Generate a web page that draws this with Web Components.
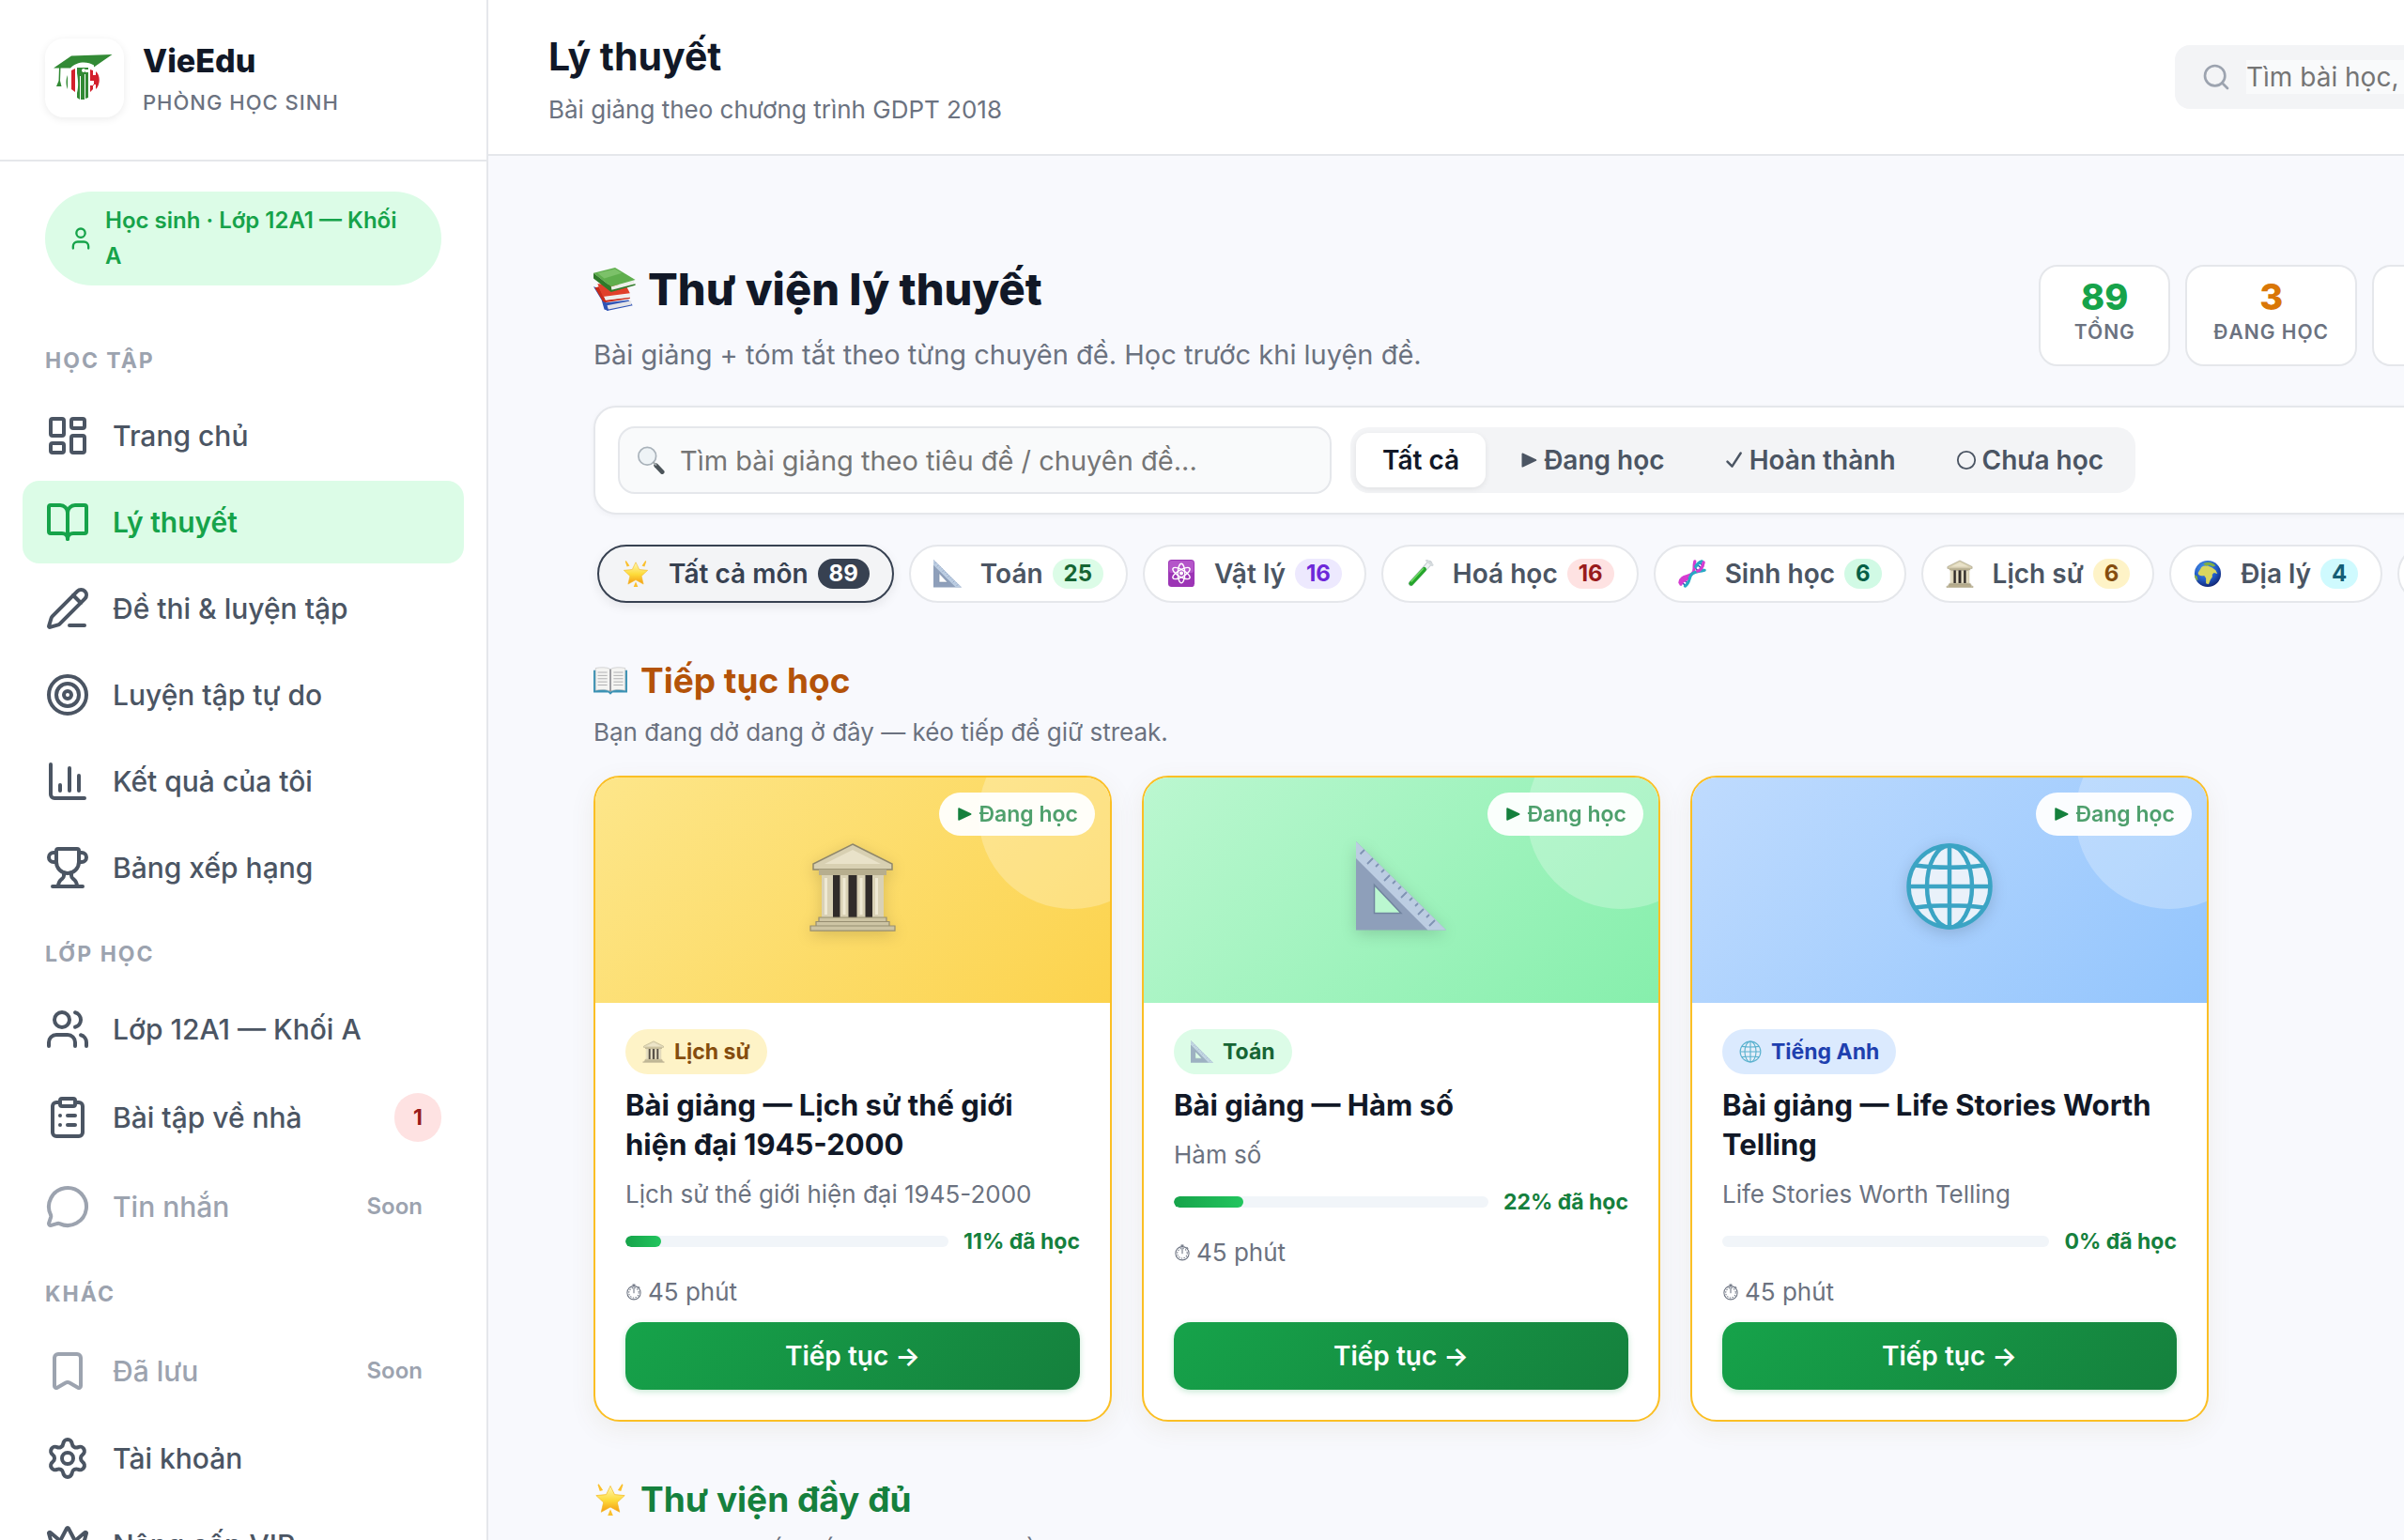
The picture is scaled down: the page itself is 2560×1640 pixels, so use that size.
<!DOCTYPE html>
<html lang="vi">
<head>
<meta charset="utf-8">
<title>VieEdu - Lý thuyết</title>
<style>
    html, body { margin: 0; height: 100%; }
    body {
        font-family: Inter, "Open Sans", sans-serif;
        font-size: 28px;
        color: #111827;
        background: #f8f9fd;
        overflow: hidden;
    }
    vie-app { height: 100%; }
</style>
</head>
<body>
<vie-app>
    <vie-sidebar slot="sidebar">
        <vie-nav-group label="Học tập">
            <vie-nav-item icon="dashboard">Trang chủ</vie-nav-item>
            <vie-nav-item icon="book" active>Lý thuyết</vie-nav-item>
            <vie-nav-item icon="pen">Đề thi &amp; luyện tập</vie-nav-item>
            <vie-nav-item icon="target">Luyện tập tự do</vie-nav-item>
            <vie-nav-item icon="chart">Kết quả của tôi</vie-nav-item>
            <vie-nav-item icon="trophy">Bảng xếp hạng</vie-nav-item>
        </vie-nav-group>
        <vie-nav-group label="Lớp học">
            <vie-nav-item icon="users">Lớp 12A1 — Khối A</vie-nav-item>
            <vie-nav-item icon="clipboard" badge="1">Bài tập về nhà</vie-nav-item>
            <vie-nav-item icon="message" soon>Tin nhắn</vie-nav-item>
        </vie-nav-group>
        <vie-nav-group label="Khác">
            <vie-nav-item icon="bookmark" soon>Đã lưu</vie-nav-item>
            <vie-nav-item icon="settings">Tài khoản</vie-nav-item>
            <vie-nav-item icon="crown">Nâng cấp VIP</vie-nav-item>
        </vie-nav-group>
    </vie-sidebar>

    <vie-topbar slot="topbar" heading="Lý thuyết" sub="Bài giảng theo chương trình GDPT 2018"></vie-topbar>

    <vie-page-head heading="Thư viện lý thuyết" sub="Bài giảng + tóm tắt theo từng chuyên đề. Học trước khi luyện đề.">
        <vie-stat value="89" label="Tổng" style="--tone:#16a34a"></vie-stat>
        <vie-stat value="3" label="Đang học" style="--tone:#d97706"></vie-stat>
        <vie-stat value="0" label="Hoàn thành" style="--tone:#2563eb"></vie-stat>
    </vie-page-head>

    <vie-toolbar></vie-toolbar>

    <vie-chips>
        <vie-chip icon="star" count="89" active style="--badge:#374151;--ink:#fff">Tất cả môn</vie-chip>
        <vie-chip icon="ruler" count="25" style="--badge:#dcfce7;--ink:#166534">Toán</vie-chip>
        <vie-chip icon="atom" count="16" style="--badge:#ede9fe;--ink:#6d28d9">Vật lý</vie-chip>
        <vie-chip icon="tube" count="16" style="--badge:#fee2e2;--ink:#991b1b">Hoá học</vie-chip>
        <vie-chip icon="dna" count="6" style="--badge:#d1fae5;--ink:#065f46">Sinh học</vie-chip>
        <vie-chip icon="temple" count="6" style="--badge:#fef3c7;--ink:#854d0e">Lịch sử</vie-chip>
        <vie-chip icon="earth" count="4" style="--badge:#cffafe;--ink:#155e75">Địa lý</vie-chip>
        <vie-chip icon="globe" count="12" style="--badge:#dbeafe;--ink:#1e40af">Tiếng Anh</vie-chip>
    </vie-chips>

    <vie-section icon="openbook" heading="Tiếp tục học" sub="Bạn đang dở dang ở đây — kéo tiếp để giữ streak." style="--tone:#b45309">
        <vie-lesson icon="temple" subject="Lịch sử" heading="Bài giảng — Lịch sử thế giới hiện đại 1945-2000" topic="Lịch sử thế giới hiện đại 1945-2000" done="11"
            style="--from:#fde68a;--to:#fcd34d;--tag:#fef3c7;--ink:#854d0e"></vie-lesson>
        <vie-lesson icon="ruler" subject="Toán" heading="Bài giảng — Hàm số" topic="Hàm số" done="22"
            style="--from:#bbf7d0;--to:#86efac;--tag:#dcfce7;--ink:#166534"></vie-lesson>
        <vie-lesson icon="globe" subject="Tiếng Anh" heading="Bài giảng — Life Stories Worth Telling" topic="Life Stories Worth Telling" done="0"
            style="--from:#bfdbfe;--to:#93c5fd;--tag:#dbeafe;--ink:#1e40af"></vie-lesson>
    </vie-section>

    <vie-section icon="star" heading="Thư viện đầy đủ" sub="Các bài giảng sắp xếp theo chuyên đề." style="--tone:#15803d"></vie-section>
</vie-app>

<script>
// line icons, 24x24 grid
const LINE = {
    dashboard: '<rect width="7" height="9" x="3" y="3" rx="1"/><rect width="7" height="5" x="14" y="3" rx="1"/><rect width="7" height="9" x="14" y="12" rx="1"/><rect width="7" height="5" x="3" y="16" rx="1"/>',
    book: '<path d="M12 7v14"/><path d="M3 18a1 1 0 0 1-1-1V4a1 1 0 0 1 1-1h5a4 4 0 0 1 4 4 4 4 0 0 1 4-4h5a1 1 0 0 1 1 1v13a1 1 0 0 1-1 1h-6a3 3 0 0 0-3 3 3 3 0 0 0-3-3z"/>',
    pen: '<path d="M13 21h8"/><path d="m15 5 4 4"/><path d="M21.174 6.812a1 1 0 0 0-3.986-3.987L3.842 16.174a2 2 0 0 0-.5.83l-1.321 4.352a.5.5 0 0 0 .623.622l4.353-1.32a2 2 0 0 0 .83-.497z"/>',
    target: '<circle cx="12" cy="12" r="10"/><circle cx="12" cy="12" r="6"/><circle cx="12" cy="12" r="2"/>',
    chart: '<path d="M3 3v16a2 2 0 0 0 2 2h16"/><path d="M18 17V9"/><path d="M13 17V5"/><path d="M8 17v-3"/>',
    trophy: '<path d="M10 14.66v1.626a2 2 0 0 1-.976 1.696A5 5 0 0 0 7 21.978"/><path d="M14 14.66v1.626a2 2 0 0 0 .976 1.696A5 5 0 0 1 17 21.978"/><path d="M18 9h1.5a1 1 0 0 0 0-5H18"/><path d="M4 22h16"/><path d="M6 9a6 6 0 0 0 12 0V3a1 1 0 0 0-1-1H7a1 1 0 0 0-1 1z"/><path d="M6 9H4.5a1 1 0 0 1 0-5H6"/>',
    users: '<path d="M16 21v-2a4 4 0 0 0-4-4H6a4 4 0 0 0-4 4v2"/><circle cx="9" cy="7" r="4"/><path d="M22 21v-2a4 4 0 0 0-3-3.87"/><path d="M16 3.13a4 4 0 0 1 0 7.75"/>',
    clipboard: '<rect width="8" height="4" x="8" y="2" rx="1"/><path d="M16 4h2a2 2 0 0 1 2 2v14a2 2 0 0 1-2 2H6a2 2 0 0 1-2-2V6a2 2 0 0 1 2-2h2"/><path d="M12 11h4"/><path d="M12 16h4"/><path d="M8 11h.01"/><path d="M8 16h.01"/>',
    message: '<path d="M2.992 16.342a2 2 0 0 1 .094 1.167l-1.065 3.29a1 1 0 0 0 1.236 1.168l3.413-.998a2 2 0 0 1 1.099.092 10 10 0 1 0-4.777-4.719"/>',
    bookmark: '<path d="M17 3a2 2 0 0 1 2 2v15a1 1 0 0 1-1.496.868l-4.512-2.578a2 2 0 0 0-1.984 0l-4.512 2.578A1 1 0 0 1 5 20V5a2 2 0 0 1 2-2z"/>',
    settings: '<path d="M9.671 4.136a2.34 2.34 0 0 1 4.659 0 2.34 2.34 0 0 0 3.319 1.915 2.34 2.34 0 0 1 2.33 4.033 2.34 2.34 0 0 0 0 3.831 2.34 2.34 0 0 1-2.33 4.033 2.34 2.34 0 0 0-3.319 1.915 2.34 2.34 0 0 1-4.659 0 2.34 2.34 0 0 0-3.32-1.915 2.34 2.34 0 0 1-2.33-4.033 2.34 2.34 0 0 0 0-3.831A2.34 2.34 0 0 1 6.35 6.051a2.34 2.34 0 0 0 3.319-1.915"/><circle cx="12" cy="12" r="3"/>',
    crown: '<path d="M11.562 3.266a.5.5 0 0 1 .876 0L15.39 8.87a1 1 0 0 0 1.516.294L21.183 5.5a.5.5 0 0 1 .798.519l-2.834 10.246a1 1 0 0 1-.956.734H5.81a1 1 0 0 1-.957-.734L2.02 6.02a.5.5 0 0 1 .798-.519l4.276 3.664a1 1 0 0 0 1.516-.294z"/><path d="M5 21h14"/>',
    user: '<path d="M19 21v-2a4 4 0 0 0-4-4H9a4 4 0 0 0-4 4v2"/><circle cx="12" cy="7" r="4"/>',
    search: '<circle cx="11" cy="11" r="8"/><path d="m21 21-4.3-4.3"/>',
    play: '<path d="M4 4v16l17-8z" fill="currentColor"/>',
    check: '<path stroke-width="3" d="m3 14 6 6L20 3"/>',
    ring: '<circle cx="12" cy="12" r="10"/>',
    timer: '<g stroke-width="1.4"><circle cx="12" cy="13" r="9.5"/><path d="M12 13V6.500M10.500 1.500h3M12 1.500v2M18.500 4.500l1.500 1.500"/><circle cx="12" cy="13" r="7" stroke-dasharray=".8 2.900"/></g>'
};

// coloured pictures, 32x32 grid
const ART = {
    star: '<defs><linearGradient id="s" x2="0" y2="1"><stop offset=".1" stop-color="#fff3a0"/><stop offset=".55" stop-color="#fddb3a"/><stop offset="1" stop-color="#f59a12"/></linearGradient></defs><path fill="url(#s)" stroke="#f3b61f" stroke-width=".6" stroke-linejoin="round" d="m16 3 4 8.200 9.500.9-7 6.500 2.200 9.200L16 23l-8.700 4.800 2.200-9.200-7-6.500 9.500-.9z"/><path fill="#fbc02d" d="M5 1l4 6-3 1-2-6zM27 1l-4 6 3 1 2-6zM16 25l-2.500 6h5z"/>',
    ruler: '<path fill="#8e9fba" d="M0 0v31.500h32z"/><path fill="#bccde2" d="M0 0v6l25.500 25.500H32z"/><path stroke="#7f93b3" stroke-width=".6" d="m3 3-1.500 1.500M6 6 4 8M8 8l-1 1M10 10l-1 1M12 12l-2 2M14 14l-1 1M16 16l-1 1M18 18l-2 2M20 20l-1 1M22 22l-1 1M24 24l-2 2M26 26l-1 1M28 28l-2 2"/><path fill="var(--hole,#fff)" stroke="#71849f" stroke-width=".5" d="M6.500 15.500V25.500h9.500z"/>',
    atom: '<rect width="30" height="31" x="1" rx="4" fill="#9c35b5"/><rect width="28" height="14" x="2" y="1" rx="3" fill="#b455c9"/><g fill="none" stroke="#fff" stroke-width="1.500"><ellipse cx="16" cy="15.500" rx="4" ry="11"/><ellipse cx="16" cy="15.500" rx="4" ry="11" transform="rotate(60 16 15.500)"/><ellipse cx="16" cy="15.500" rx="4" ry="11" transform="rotate(120 16 15.500)"/></g><circle cx="16" cy="15.500" r="2.200" fill="#fff"/>',
    tube: '<path fill="none" stroke="#c4cbd0" stroke-width="6" stroke-linecap="round" d="M27 4 6 27"/><path fill="none" stroke="#eef2f3" stroke-width="4" d="M27 4 21 11"/><path fill="none" stroke="#25a52b" stroke-width="5" stroke-linecap="round" d="M21 11 6 27"/><path stroke="#72df65" stroke-width="1.500" d="M20 10 6 25"/><path stroke="#d5dadd" stroke-width="3" stroke-linecap="round" d="m24 1 6 5"/>',
    dna: '<path stroke="#3757b9" stroke-width="1.600" d="m21 5 7 6M5 21l6 6M19 9l4 4M9 19l4 4M24 3l5 5M3 25l5 4"/><g fill="none" stroke-width="3.400" stroke-linecap="round"><path stroke="#d63bd0" d="M19 2c-2 8 1 10 -3 14S3 18 2 26"/><path stroke="#28a9c4" d="M30 12c-8 2-10 1-14 4S14 26 8 30"/><path stroke="#28a9c4" d="M20 8c2-4 4-5 7-6"/><path stroke="#d63bd0" d="M22 13c4-1 6-5 7-10M3 28c1-4 4-5 7-6"/></g>',
    temple: '<path fill="#d8d0b2" stroke="#8f876b" stroke-width=".5" d="M16 1 30 8v2H2V8z"/><path fill="#e9e2c9" d="M16 3 26 8H6z"/><path fill="#b7ae8e" d="M4 10h24v2H4z"/><path fill="#302b29" d="M6 12h20v15H6z"/><g fill="#d9d1b5"><path d="M5 12h4v15H5zM11.500 12h3v15h-3zM17.500 12h3v15h-3zM23 12h4v15h-4z"/></g><path fill="#efe9d4" d="M6 13h1v13H6zM12.500 13h1v13h-1zM18.500 13h1v13h-1zM24 13h1v13h-1z"/><path fill="#cdc4a4" stroke="#968d70" stroke-width=".4" d="M4 27h24v1.500H4zM3 28.500h26V30H3zM1 30h30v1.700H1z"/>',
    earth: '<defs><radialGradient id="e" cx=".4" cy=".3" r=".75"><stop stop-color="#4f9df0"/><stop offset=".6" stop-color="#2058c4"/><stop offset="1" stop-color="#10206a"/></radialGradient></defs><circle cx="16" cy="16" r="15" fill="url(#e)"/><path fill="#d9d65e" d="M8 10c1-3 5-3 8-3l5 2 4 3 2 4-4-1-2 2c1 3-1 4-2 6l-2 5-3-1v-6l-2-3c-4 1-7 0-7-3z"/><path fill="#7fae45" d="M11 5c3-3 10-3 14 2l-3 1-4-2-4 1zM1 17l3 2 1 5c-3-2-4-4-4-7z"/>',
    globe: '<circle cx="16" cy="16" r="15" fill="#e9f1fa"/><g fill="none" stroke="#3ba4c4" stroke-width="1.500"><circle cx="16" cy="16" r="14.500"/><ellipse cx="16" cy="16" rx="8" ry="14.500"/><path d="M16 1.500v29M1.500 16h29M4 8.500c7 1 17 1 24 0M4 23.500c7-1 17-1 24 0"/></g>',
    openbook: '<path fill="#3c93b5" d="M0 6h32v21H18l-2 2-2-2H0z"/><path fill="#f4f4f2" stroke="#b9b9b9" stroke-width=".5" d="M2 4c5-1 11-1 14 1 3-2 9-2 14-1v21c-5-1-11-1-14 1-3-2-9-2-14-1z"/><path stroke="#a9a9ac" stroke-width=".8" d="M4 8h9M4 11h9M4 14h9M4 17h9M4 20h9M19 8h9M19 11h9M19 14h9M19 17h9M19 20h9"/><path stroke="#8d8d92" stroke-width="1.500" d="M16 5v21"/>',
    books: '<path fill="#2f54b5" d="m8 26 18-2 3 4-19 4z"/><path fill="#e4e4e8" d="m10 28 18-3.500v3L11 31z"/><path fill="#2f54b5" d="M0 14l6 10 2 7 3 1-2-7-6-10z"/><path fill="#c92a18" d="m1 15 6 10 2 .8L27 23v-1.200L9 24 4 14z"/><path fill="#eeeeec" d="m8 21.500 19-2v2.600l-18 2z"/><path fill="#e0402a" d="m3 12 21 1 3 6-20 2.500z"/><path fill="#ecefe9" d="m13 14 17-4.500v3.500l-16.500 4.500z"/><path fill="#5fae4d" d="M0 4 16 0l15 9-18 5z"/><path fill="#7cc169" d="m3 4 13-3 5 3-13 4z"/><path fill="#2f7a29" d="M0 4v4l13 10 18-5v-1l-17.500 4.500L13 14z"/>',
    lens: '<circle cx="12" cy="11.500" r="10" fill="#eef3f6" stroke="#a9b2ba" stroke-width="1.800"/><path stroke="#4c5459" stroke-width="5" stroke-linecap="round" d="m22 22 7 7.500"/><path stroke="#a0a7ab" stroke-width="2" d="m18.500 18 4 4"/>'
};

const line = (name, size) => `<svg class="line" width="${size}" height="${size}" viewBox="0 0 24 24" fill="none" stroke="currentColor" stroke-width="2" stroke-linecap="round" stroke-linejoin="round" aria-hidden="true">${LINE[name]}</svg>`;
const art = (name, size) => `<svg class="art" width="${size}" height="${size}" viewBox="0 0 32 32" aria-hidden="true">${ART[name]}</svg>`;

const BASE = `
    *, *::before, *::after { box-sizing: border-box; }
    h1, h2, h3, p { margin: 0; }
    button, input { font: inherit; color: inherit; border: 0; }
    svg { display: block; flex: none; }
`;

class VieElement extends HTMLElement {
    connectedCallback() {
        if (this.shadowRoot) return;
        this.attachShadow({ mode: 'open' });
        this.shadowRoot.innerHTML = `<style>${BASE}${this.css()}</style>${this.html()}`;
    }
    attr(name) {
        return this.getAttribute(name) || '';
    }
}

customElements.define('vie-app', class extends VieElement {
    css() {
        return `
            :host { display: grid; grid-template-columns: 520px minmax(0, 1fr); }
            main { overflow: hidden; }
            /* the study area is wider than the window and is cut at its edge */
            .wide { width: calc(100% + 300px); }
            .content {
                display: flex;
                flex-direction: column;
                padding: 110px 100px 0 112px;
            }
        `;
    }
    html() {
        return `
            <slot name="sidebar"></slot>
            <main>
                <div class="wide">
                    <slot name="topbar"></slot>
                    <div class="content"><slot></slot></div>
                </div>
            </main>
        `;
    }
});

customElements.define('vie-sidebar', class extends VieElement {
    css() {
        return `
            :host {
                display: block;
                background: #fff;
                border-right: 2px solid #e5e7eb;
                overflow: hidden;
            }
            .brand {
                display: flex;
                align-items: center;
                gap: 20px;
                height: 172px;
                padding: 0 48px 4px;
                border-bottom: 2px solid #e5e7eb;
            }
            .logo {
                width: 84px;
                height: 84px;
                border-radius: 20px;
                background: #fff;
                box-shadow: 0 2px 8px rgba(0, 0, 0, 0.08);
            }
            .names { padding-top: 4px; }
            .name { font-size: 34px; line-height: 48px; font-weight: 800; }
            .room {
                font-size: 22px;
                line-height: 40px;
                font-weight: 500;
                letter-spacing: 1px;
                text-transform: uppercase;
                color: #6b7280;
            }
            .pill {
                display: flex;
                align-items: center;
                gap: 12px;
                margin: 32px 48px 36px;
                padding: 12px 40px 12px 24px;
                border-radius: 50px;
                background: #dcfce7;
                color: #16a34a;
                font-size: 24px;
                line-height: 38px;
                font-weight: 600;
            }
            nav { padding: 0 24px; }
        `;
    }
    html() {
        return `
            <div class="brand">
                <div class="logo">
                    <svg width="84" height="84" viewBox="0 0 84 84" role="img" aria-label="VieEdu">
                        <path fill="#328a35" d="M9 31.500 28 18.500 71.500 17 52 30.500v-2C45 24 34 24 27 31.500z"/>
                        <path fill="#328a35" d="M15 31h1.500l-.5 14 1.500 6h-5.500l2.500-6z"/>
                        <path fill="#d3202c" d="M28 34l4-2v25l-4-3zM48 33l3 1v5h3v-4c5 4 5 14 0 19v-5h-3v5l-3 3v-7h4v-5h-4z"/>
                        <path fill="#328a35" d="M24 39v15c-2-4-2-11 0-15zM34 31h12v2h-3v3h3v27l-3 1V38h-1v27h-4V40h-1v25l-3-2V58c2-7 1-15 0-21z"/>
                        <circle cx="41" cy="34" r="2" fill="#fff"/>
                    </svg>
                </div>
                <div class="names">
                    <div class="name">VieEdu</div>
                    <div class="room">Phòng học sinh</div>
                </div>
            </div>
            <div class="pill">${line('user', 28)}<span>Học sinh · Lớp 12A1 — Khối A</span></div>
            <nav><slot></slot></nav>
        `;
    }
});

customElements.define('vie-nav-group', class extends VieElement {
    css() {
        return `
            :host { display: flex; flex-direction: column; gap: 4px; }
            .label {
                padding: 26px 24px 14px;
                font-size: 23px;
                line-height: 36px;
                font-weight: 700;
                letter-spacing: 2px;
                text-transform: uppercase;
                color: #9ca3af;
            }
            :host(:not(:first-child)) { margin-top: 4px; }
        `;
    }
    html() {
        return `<div class="label">${this.attr('label')}</div><slot></slot>`;
    }
});

customElements.define('vie-nav-item', class extends VieElement {
    css() {
        return `
            :host { display: block; }
            a {
                display: flex;
                align-items: center;
                gap: 24px;
                min-height: 88px;
                padding: 0 24px;
                border-radius: 18px;
                color: #4b5563;
                font-weight: 500;
                font-size: 30px;
                line-height: 44px;
                text-decoration: none;
            }
            :host([active]) a { background: #dcfce7; color: #16a34a; font-weight: 600; }
            :host([soon]) a { min-height: 91px; color: #9ca3af; }
            :host([badge]) a { min-height: 91px; }
            .text { flex: 1; }
            .badge {
                width: 50px;
                border-radius: 26px;
                background: #fee2e2;
                color: #991b1b;
                font-size: 23px;
                line-height: 52px;
                font-weight: 700;
                text-align: center;
            }
            .soon { padding-right: 20px; font-size: 24px; font-weight: 600; }
        `;
    }
    html() {
        const badge = this.attr('badge');
        return `
            <a href="#">
                ${line(this.attr('icon'), 48)}
                <span class="text"><slot></slot></span>
                ${badge ? `<span class="badge">${badge}</span>` : ''}
                ${this.hasAttribute('soon') ? '<span class="soon">Soon</span>' : ''}
            </a>
        `;
    }
});

customElements.define('vie-topbar', class extends VieElement {
    css() {
        return `
            :host {
                display: flex;
                align-items: center;
                justify-content: space-between;
                box-sizing: border-box;
                height: 166px;
                padding: 0 64px;
                background: #fff;
                border-bottom: 2px solid #e5e7eb;
            }
            .titles { padding-top: 10px; }
            h1 { font-size: 41px; line-height: 60px; font-weight: 700; }
            p { font-size: 26px; line-height: 54px; color: #6b7280; }
            label {
                display: flex;
                align-items: center;
                gap: 16px;
                width: 480px;
                height: 68px;
                padding: 0 28px;
                border-radius: 16px;
                background: #f3f4f6;
                color: #9ca3af;
            }
            input {
                flex: 1;
                min-width: 0;
                height: 36px;
                padding: 0;
                background: #f9fafb;
                font-size: 28px;
            }
            input::placeholder { color: #757575; }
        `;
    }
    html() {
        return `
            <div class="titles"><h1>${this.attr('heading')}</h1><p>${this.attr('sub')}</p></div>
            <label>${line('search', 32)}<input type="search" placeholder="Tìm bài học, đề thi" aria-label="Tìm kiếm"></label>
        `;
    }
});

customElements.define('vie-page-head', class extends VieElement {
    css() {
        return `
            :host { display: flex; justify-content: space-between; height: 156px; }
            h1 {
                display: flex;
                align-items: center;
                gap: 12px;
                font-size: 47px;
                line-height: 64px;
                font-weight: 800;
            }
            p { margin-top: 16px; font-size: 29px; line-height: 44px; color: #6b7280; }
            .stats { display: flex; align-items: flex-start; gap: 16px; padding-top: 6px; }
        `;
    }
    html() {
        return `
            <div>
                <h1>${art('books', 46)}<span>${this.attr('heading')}</span></h1>
                <p>${this.attr('sub')}</p>
            </div>
            <div class="stats"><slot></slot></div>
        `;
    }
});

customElements.define('vie-stat', class extends VieElement {
    css() {
        return `
            :host {
                display: block;
                box-sizing: border-box;
                min-width: 140px;
                height: 108px;
                padding: 8px 28px;
                border: 2px solid #e5e7eb;
                border-radius: 20px;
                background: #fff;
                text-align: center;
            }
            :host(:last-child) { width: 234px; }
            .value { color: var(--tone); font-size: 38px; line-height: 48px; font-weight: 800; }
            .label {
                font-size: 21px;
                line-height: 28px;
                font-weight: 600;
                letter-spacing: 1px;
                text-transform: uppercase;
                white-space: nowrap;
                color: #6b7280;
            }
        `;
    }
    html() {
        return `<div class="value">${this.attr('value')}</div><div class="label">${this.attr('label')}</div>`;
    }
});

customElements.define('vie-toolbar', class extends VieElement {
    css() {
        return `
            :host {
                display: flex;
                align-items: center;
                gap: 20px;
                box-sizing: border-box;
                height: 116px;
                padding: 0 24px;
                border: 2px solid #e5e7eb;
                border-radius: 24px;
                background: #fff;
                box-shadow: 0 2px 6px rgba(15, 23, 42, 0.04);
            }
            .search {
                display: flex;
                align-items: center;
                gap: 16px;
                width: 760px;
                height: 72px;
                padding: 0 18px;
                border: 2px solid #e5e7eb;
                border-radius: 18px;
                background: #f9fafb;
            }
            input { flex: 1; min-width: 0; padding: 0; background: none; font-size: 29px; }
            input::placeholder { color: #757575; }
            .tabs {
                display: flex;
                gap: 8px;
                padding: 6px;
                border-radius: 20px;
                background: #f3f4f6;
            }
            button {
                display: flex;
                align-items: center;
                gap: 6px;
                height: 58px;
                padding: 0 28px;
                border-radius: 14px;
                background: none;
                color: #4b5563;
                font-size: 28px;
                font-weight: 600;
            }
            button.on { background: #fff; color: #111827; box-shadow: 0 2px 6px rgba(0, 0, 0, 0.08); }
        `;
    }
    html() {
        return `
            <label class="search">${art('lens', 30)}<input type="search" placeholder="Tìm bài giảng theo tiêu đề / chuyên đề..." aria-label="Tìm bài giảng"></label>
            <div class="tabs">
                <button class="on">Tất cả</button>
                <button>${line('play', 20)}Đang học</button>
                <button>${line('check', 20)}Hoàn thành</button>
                <button>${line('ring', 22)}Chưa học</button>
            </div>
        `;
    }
});

customElements.define('vie-chips', class extends VieElement {
    css() {
        return `:host { display: flex; gap: 16px; padding: 32px 4px 0; }`;
    }
    html() {
        return '<slot></slot>';
    }
});

customElements.define('vie-chip', class extends VieElement {
    css() {
        return `
            :host { display: block; flex: none; }
            button {
                display: flex;
                align-items: center;
                height: 62px;
                padding: 0 24px;
                border: 2px solid #e5e7eb;
                border-radius: 31px;
                background: #fff;
                color: #4b5563;
                font-size: 28px;
                font-weight: 600;
            }
            :host([active]) button {
                border-color: #374151;
                background: #f3f4f6;
                color: #374151;
                box-shadow: 0 4px 12px rgba(0, 0, 0, 0.08);
            }
            .text { margin: 0 10px 0 20px; }
            .count {
                padding: 0 12px;
                border-radius: 16px;
                background: var(--badge);
                color: var(--ink);
                font-size: 24px;
                line-height: 32px;
                font-weight: 700;
            }
        `;
    }
    html() {
        return `<button>${art(this.attr('icon'), 30)}<span class="text"><slot></slot></span><span class="count">${this.attr('count')}</span></button>`;
    }
});

customElements.define('vie-section', class extends VieElement {
    css() {
        return `
            :host { display: block; padding-top: 56px; }
            h2 {
                display: flex;
                align-items: center;
                gap: 14px;
                color: var(--tone);
                font-size: 37px;
                line-height: 54px;
                font-weight: 700;
            }
            p { margin-top: 8px; font-size: 26px; line-height: 40px; color: #6b7280; }
            .grid {
                display: grid;
                grid-template-columns: repeat(auto-fill, 552px);
                gap: 32px;
                padding-top: 26px;
            }
        `;
    }
    html() {
        return `
            <h2>${art(this.attr('icon'), 36)}<span>${this.attr('heading')}</span></h2>
            <p>${this.attr('sub')}</p>
            <div class="grid"><slot></slot></div>
        `;
    }
});

customElements.define('vie-lesson', class extends VieElement {
    css() {
        return `
            :host {
                display: flex;
                flex-direction: column;
                overflow: hidden;
                box-sizing: border-box;
                border: 2px solid #fbbf24;
                border-radius: 28px;
                background: #fff;
                box-shadow: 0 8px 28px rgba(120, 90, 10, 0.08);
            }
            .hero {
                position: relative;
                display: grid;
                place-items: center;
                height: 240px;
                padding-bottom: 8px;
                overflow: hidden;
                background: linear-gradient(135deg, var(--from), var(--to));
            }
            .hero::after {
                content: "";
                position: absolute;
                top: -60px;
                right: -60px;
                width: 200px;
                height: 200px;
                border-radius: 50%;
                background: rgba(255, 255, 255, 0.25);
            }
            .hero .art { --hole: var(--from); filter: drop-shadow(0 4px 8px rgba(0, 0, 0, 0.15)); }
            .state {
                position: absolute;
                z-index: 1;
                top: 16px;
                right: 16px;
                display: flex;
                align-items: center;
                gap: 6px;
                height: 46px;
                padding: 0 18px;
                border-radius: 23px;
                background: rgba(255, 255, 255, 0.95);
                color: #15803d;
                font-size: 23px;
                font-weight: 600;
            }
            .state span { opacity: 0.75; }
            .body {
                display: flex;
                flex: 1;
                flex-direction: column;
                align-items: stretch;
                padding: 28px 32px 32px;
            }
            .tag {
                display: flex;
                align-items: center;
                align-self: flex-start;
                gap: 10px;
                height: 48px;
                padding: 0 18px;
                border-radius: 24px;
                background: var(--tag);
                color: var(--ink);
                font-size: 23px;
                line-height: 28px;
                font-weight: 700;
            }
            .tag .art { --hole: var(--tag); opacity: 0.8; }
            h3 { margin: 12px 0; padding-right: 12px; font-size: 31px; line-height: 42px; font-weight: 700; }
            .topic { font-size: 26px; line-height: 40px; color: #6b7280; }
            .progress {
                display: flex;
                align-items: center;
                gap: 16px;
                margin: 12px 0 18px;
                color: #15803d;
                font-size: 23px;
                line-height: 36px;
                font-weight: 700;
            }
            .track { flex: 1; height: 12px; border-radius: 6px; background: #f1f5f9; overflow: hidden; }
            .fill { height: 100%; border-radius: 6px; background: linear-gradient(90deg, #16a34a, #22c55e); }
            .time {
                display: flex;
                align-items: center;
                gap: 6px;
                margin-bottom: 14px;
                font-size: 26px;
                line-height: 36px;
                color: #6b7280;
            }
            button {
                height: 72px;
                margin-top: auto;
                border-radius: 18px;
                background: linear-gradient(135deg, #16a34a, #15803d);
                box-shadow: 0 2px 6px rgba(22, 163, 74, 0.25);
                color: #fff;
                font-size: 28px;
                font-weight: 600;
            }
        `;
    }
    html() {
        const icon = this.attr('icon');
        const done = this.attr('done');
        return `
            <div class="hero">
                ${art(icon, 96)}
                <div class="state">${line('play', 18)}<span>Đang học</span></div>
            </div>
            <div class="body">
                <div class="tag">${art(icon, 24)}<span>${this.attr('subject')}</span></div>
                <h3>${this.attr('heading')}</h3>
                <div class="topic">${this.attr('topic')}</div>
                <div class="progress">
                    <div class="track" role="progressbar" aria-label="Tiến độ" aria-valuenow="${done}"><div class="fill" style="width:${done}%"></div></div>
                    <span>${done}% đã học</span>
                </div>
                <div class="time">${line('timer', 18)}<span>45 phút</span></div>
                <button>Tiếp tục →</button>
            </div>
        `;
    }
});
</script>
</body>
</html>
